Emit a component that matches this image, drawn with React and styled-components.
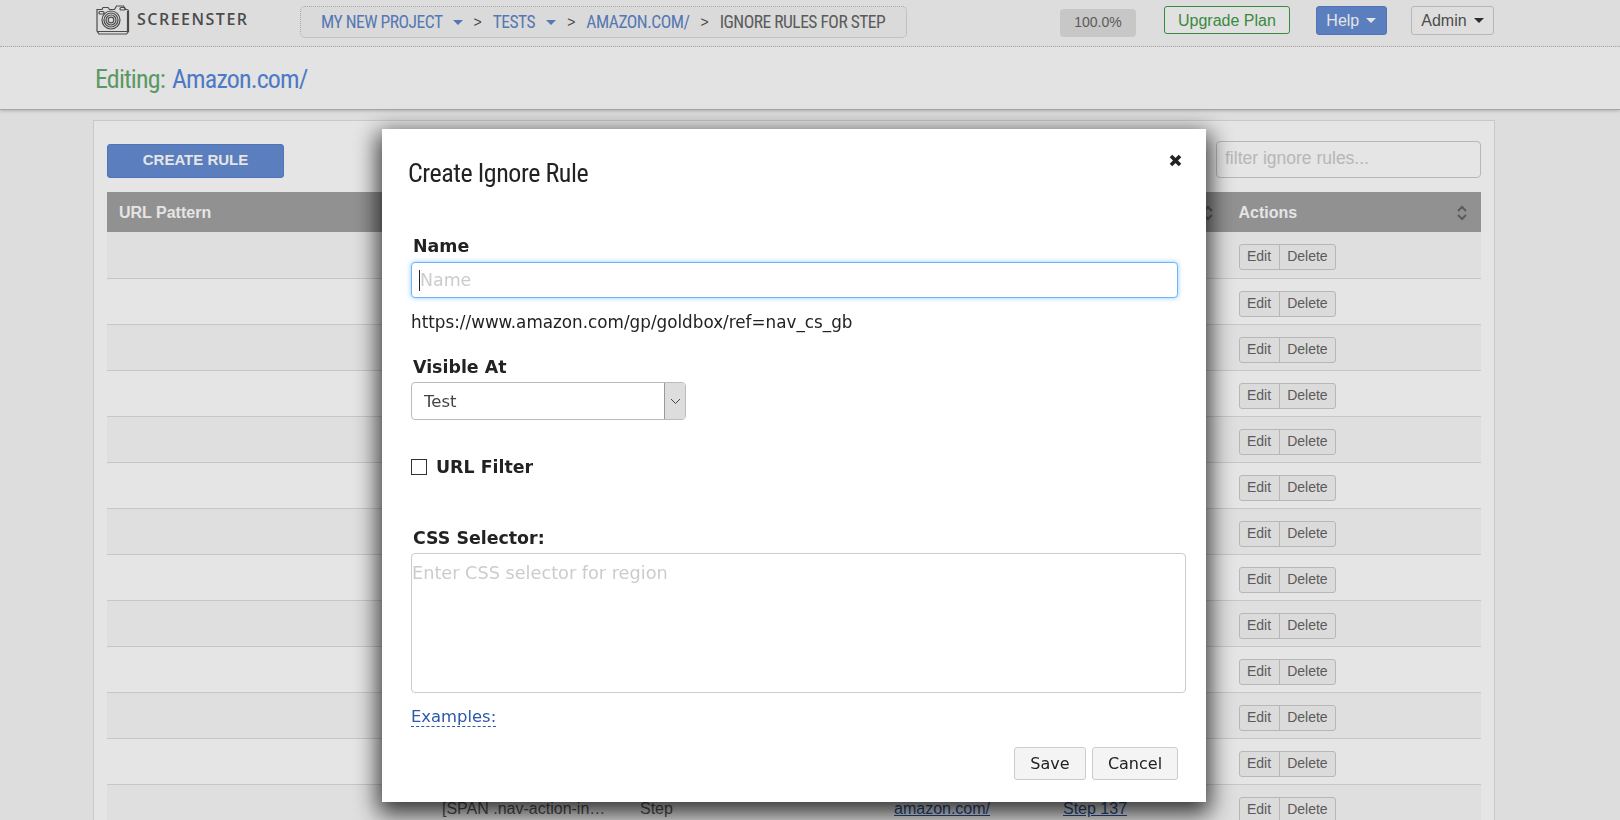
import React from 'react';
import styled, { createGlobalStyle } from 'styled-components';

const narrow = `"Roboto", "Liberation Sans", sans-serif`;
const arial = `"Liberation Sans", Arial, sans-serif`;
const dejavu = `"DejaVu Sans", Verdana, sans-serif`;

const Global = createGlobalStyle`
  html, body {
    margin: 0;
    height: 820px;
    overflow: hidden;
    background: #f6f6f6;
    font-family: ${arial};
  }
  * { box-sizing: border-box; }
`;

const Nav = styled.header`
  display: flex;
  align-items: flex-start;
  height: 47px;
  padding: 6px 0 0 95px;
  border-bottom: 1px dotted #c4c4c4;
`;

const Logo = styled.div`
  display: flex;
  align-items: center;
  gap: 7px;
  width: 205px;
  height: 30px;
  margin-top: -2px;
`;

const LogoText = styled.span`
  font: 600 16px "Open Sans", sans-serif;
  letter-spacing: 1.5px;
  color: #555;
`;

const Crumbs = styled.nav`
  display: flex;
  align-items: center;
  width: 607px;
  height: 32px;
  padding-left: 20px;
  border: 1px dotted #bbb;
  border-radius: 5px;
  background: #f3f3f3;
`;

const Crumb = styled.span`
  font: 400 17.5px ${narrow};
  font-stretch: 75%;
  letter-spacing: -0.5px;
  color: ${p => p.$muted ? '#666' : '#5f86c9'};
  white-space: nowrap;
`;

const Sep = styled.span`
  margin: 0 11px;
  font: 400 14px ${arial};
  color: #555;
`;

const Caret = styled.i`
  display: inline-block;
  margin-left: ${p => p.$gap || 10}px;
  border-top: 5px solid ${p => p.$color};
  border-left: 5px solid transparent;
  border-right: 5px solid transparent;
  vertical-align: 3px;
`;

const Right = styled.div`
  display: flex;
  align-items: flex-start;
  margin-left: 153px;
`;

const Zoom = styled.div`
  width: 76px;
  height: 28px;
  margin-top: 3px;
  border-radius: 4px;
  background: #dedede;
  color: #666;
  font: 14px/27px ${arial};
  text-align: center;
`;

const NavButton = styled.div`
  height: ${p => p.$h || 29}px;
  margin-left: ${p => p.$left}px;
  padding: 0 ${p => p.$pad || 9}px;
  border: 1px solid ${p => p.$border};
  border-radius: 3px;
  background: ${p => p.$bg || 'transparent'};
  color: ${p => p.$color};
  font: 16px/${p => (p.$h || 29) - 1}px ${arial};
  white-space: nowrap;
`;

const SubHeader = styled.div`
  height: 63px;
  padding: 14px 0 0 95px;
  background: #fdfdfd;
  border-bottom: 1px solid #b8b8b8;
  box-shadow: 0 1px 3px rgba(0, 0, 0, 0.2);
  font: 400 26px/36px ${narrow};
  font-stretch: 75%;
  letter-spacing: -0.85px;
`;

const Editing = styled.span`
  color: #66aa6f;
  margin-right: 7px;
`;

const Current = styled.span`
  color: #5688dc;
`;

const Panel = styled.main`
  width: 1402px;
  margin: 10px 0 0 93px;
  padding: 20px 13px 0;
  background: #fff;
  border: 1px solid #e0e0e0;
`;

const Toolbar = styled.div`
  display: flex;
  justify-content: space-between;
  align-items: flex-end;
  height: 37px;
  margin-bottom: 14px;
`;

const CreateButton = styled.button`
  width: 177px;
  height: 34px;
  padding: 0 0 3px;
  border: 1px solid #5a82cc;
  border-radius: 3px;
  background: #658dd4;
  color: #fff;
  font: 700 15px ${arial};
  text-transform: uppercase;
`;

const Filter = styled.input`
  width: 265px;
  height: 37px;
  padding: 0 8px 2px;
  border: 1px solid #ccc;
  border-radius: 4px;
  background: #fff;
  font: 17.5px ${arial};
  &::placeholder { color: #ccc; }
`;

const grid = `
  display: grid;
  grid-template-columns: 323px 198px 254px 169px 175.5px 254.5px;
`;

const HeadRow = styled.div`
  ${grid}
  height: 40px;
  background: #a2a2a2;
`;

const HeadCell = styled.div`
  display: flex;
  justify-content: space-between;
  align-items: center;
  padding: 1px 13px 0 12px;
  color: #fff;
  font: 700 16px ${arial};
`;

const Row = styled.div`
  ${grid}
  align-items: center;
  height: 46px;
  padding-top: 2px;
  background: ${p => p.$odd ? '#fff' : '#f9f9f9'};
  border-top: 1px solid #ddd;
  &:nth-child(2) { border-top: 0; }
`;

const Cell = styled.div`
  padding: 0 12px;
  color: #5c5c5c;
  font: 16px ${arial};
  white-space: nowrap;
`;

const ActionCell = styled(Cell)`
  margin-top: 2px;
`;

const RowLink = styled.a`
  color: #2a5298;
  text-decoration: underline;
`;

const ButtonGroup = styled.div`
  display: inline-flex;
  height: 26px;
  border: 1px solid #ccc;
  border-radius: 3px;
  background: #f4f4f4;
`;

const GroupItem = styled.span`
  padding: 0 7.500px;
  border-left: ${p => p.$first ? '0' : '1px solid #ccc'};
  color: #666;
  font: 14px/23px ${arial};
`;

const Backdrop = styled.div`
  position: fixed;
  inset: 0;
  padding: 129px 0 0 382px;
  background: rgba(0, 0, 0, 0.1);
`;

const Modal = styled.section`
  width: 824px;
  height: 673px;
  padding: 26px 20px 0 29px;
  background: #fff;
  box-shadow: 0 8px 22px 4px rgba(0, 0, 0, 0.76);
`;

const ModalHead = styled.div`
  display: flex;
  justify-content: space-between;
  align-items: flex-start;
  height: 81px;
  margin-left: -3px;
`;

const Title = styled.h2`
  margin: 0;
  font: 400 26px/36px ${narrow};
  font-stretch: 75%;
  letter-spacing: -0.45px;
  color: #222;
`;

const Close = styled.svg`
  width: 13px;
  height: 13px;
  margin: -1px 4px 0 0;
`;

const Label = styled.label`
  display: block;
  height: 20px;
  margin: ${p => p.$top || 0}px 0 ${p => p.$bottom}px 2px;
  color: #222;
  font: 700 17.4px/20px ${dejavu};
`;

const NameField = styled.div`
  position: relative;
  width: 767px;
`;

const NameInput = styled.input`
  display: block;
  width: 100%;
  height: 36px;
  padding: 0 8px;
  border: 1px solid #6fb5f5;
  border-radius: 4px;
  outline: 0;
  box-shadow: 0 0 5px rgba(100, 180, 250, 0.7);
  font: 17.4px ${dejavu};
  &::placeholder { color: #ccc; }
`;

const TextCaret = styled.span`
  position: absolute;
  left: 8px;
  top: 8px;
  width: 1px;
  height: 21px;
  background: #222;
`;

const UrlText = styled.div`
  margin-top: 14px;
  height: 20px;
  color: #222;
  font: 16.8px/20px ${dejavu};
`;

const SelectBox = styled.div`
  display: flex;
  justify-content: space-between;
  width: 275px;
  height: 38px;
  border: 1px solid #bbb;
  border-radius: 4px;
  color: #444;
  font: 16.5px/37px ${dejavu};
  padding-left: 12px;
  overflow: hidden;
`;

const SelectArrow = styled.span`
  display: flex;
  align-items: center;
  justify-content: center;
  width: 21px;
  background: #ddd;
  border-left: 1px solid #999;
`;

const CheckRow = styled.div`
  display: flex;
  align-items: center;
  gap: 9px;
  height: 20px;
  margin-top: 37px;
  color: #222;
  font: 700 17.4px/20px ${dejavu};
`;

const CheckBox = styled.span`
  width: 16px;
  height: 16px;
  border: 1px solid #333;
`;

const Area = styled.textarea`
  display: block;
  width: 775px;
  height: 140px;
  padding: 7px 0;
  border: 1px solid #ccc;
  border-radius: 4px;
  resize: none;
  font: 17.7px/24px ${dejavu};
  &::placeholder { color: #ccc; }
`;

const Examples = styled.a`
  display: inline-block;
  height: 22px;
  margin-top: 12px;
  border-bottom: 1px dashed #2a5aa8;
  color: #2a5aa8;
  font: 16.4px/24px ${dejavu};
`;

const Footer = styled.div`
  display: flex;
  justify-content: flex-end;
  gap: 6px;
  width: 767px;
  margin-top: 20px;
`;

const FootButton = styled.button`
  width: ${p => p.$w}px;
  height: 33px;
  border: 1px solid #ccc;
  border-radius: 3px;
  background: #f4f4f4;
  color: #222;
  font: 16px ${dejavu};
`;

const Sort = () => (
  <svg width="12" height="16" viewBox="0 0 12 16" fill="none" stroke="#666" strokeWidth="2">
    <path d="M2 6l4-4 4 4M2 10l4 4 4-4" />
  </svg>
);

const CameraLogo = () => (
  <svg width="35" height="33" viewBox="0 0 35 33" fill="none" stroke="#555" strokeWidth="1.2">
    <path d="M2 6.5h5l1-2h5l1.500 2h5l2-3.500h7l2 3.500h1a2 2 0 0 1 2 2v20l-2 2.500H4l-2-3z" />
    <path d="M2 28.500h30.500l1.500-1M32.500 8v20.500" />
    <circle cx="16" cy="17" r="9" />
    <circle cx="16" cy="17" r="7" />
    <circle cx="16" cy="17" r="5" />
    <circle cx="16" cy="17" r="2.800" />
    <rect x="4" y="8.500" width="5" height="2.500" rx="1" />
    <rect x="25" y="4.500" width="5" height="2.500" rx="1" />
  </svg>
);

// only the last row sticks out below the modal, the others show just their actions
const rows = Array.from({ length: 13 }, (_, i) => (i === 12
  ? { selector: '[SPAN .nav-action-in…', type: 'Step', url: 'amazon.com/', step: 'Step 137' }
  : {}));

export default function App() {
  return (
    <>
      <Global />
      <Nav>
        <Logo>
          <CameraLogo />
          <LogoText>SCREENSTER</LogoText>
        </Logo>
        <Crumbs>
          <Crumb>MY NEW PROJECT</Crumb>
          <Caret $color="#5f86c9" />
          <Sep>&gt;</Sep>
          <Crumb>TESTS</Crumb>
          <Caret $color="#5f86c9" $gap={11} />
          <Sep>&gt;</Sep>
          <Crumb>AMAZON.COM/</Crumb>
          <Sep>&gt;</Sep>
          <Crumb $muted>IGNORE RULES FOR STEP</Crumb>
        </Crumbs>
        <Right>
          <Zoom>100.0%</Zoom>
          <NavButton $left={28} $border="#3f9a45" $color="#3f9a45" $pad={13} $h={28} $bg="#fbfbfb">Upgrade Plan</NavButton>
          <NavButton $left={26} $border="#5a82cc" $color="#fff" $bg="#658dd4" $pad={9.5}>
            Help<Caret $color="#fff" $gap={7} />
          </NavButton>
          <NavButton $left={24} $border="#ccc" $color="#555" $bg="#f8f8f8" $pad={9.5}>
            Admin<Caret $color="#333" $gap={7} />
          </NavButton>
        </Right>
      </Nav>
      <SubHeader>
        <Editing>Editing:</Editing>
        <Current>Amazon.com/</Current>
      </SubHeader>
      <Panel>
        <Toolbar>
          <CreateButton>Create Rule</CreateButton>
          <Filter placeholder="filter ignore rules..." />
        </Toolbar>
        <div>
          <HeadRow>
            <HeadCell>URL Pattern</HeadCell>
            <HeadCell />
            <HeadCell />
            <HeadCell />
            <HeadCell><span /><Sort /></HeadCell>
            <HeadCell>Actions<Sort /></HeadCell>
          </HeadRow>
          {rows.map((row, i) => (
            <Row key={i} $odd={i % 2 === 1}>
              <Cell />
              <Cell>{row.selector}</Cell>
              <Cell>{row.type}</Cell>
              <Cell><RowLink>{row.url}</RowLink></Cell>
              <Cell><RowLink>{row.step}</RowLink></Cell>
              <ActionCell>
                <ButtonGroup>
                  <GroupItem $first>Edit</GroupItem>
                  <GroupItem>Delete</GroupItem>
                </ButtonGroup>
              </ActionCell>
            </Row>
          ))}
        </div>
      </Panel>
      <Backdrop>
        <Modal>
          <ModalHead>
            <Title>Create Ignore Rule</Title>
            <Close viewBox="0 0 13 13" stroke="#222" strokeWidth="3.600">
              <path d="M2 2l9 9M11 2l-9 9" />
            </Close>
          </ModalHead>
          <Label $bottom={6}>Name</Label>
          <NameField>
            <NameInput placeholder="Name" />
            <TextCaret />
          </NameField>
          <UrlText>https://www.amazon.com/gp/goldbox/ref=nav_cs_gb</UrlText>
          <Label $top={25} $bottom={5}>Visible At</Label>
          <SelectBox>
            Test
            <SelectArrow>
              <svg width="11" height="7" viewBox="0 0 11 7" fill="none" stroke="#444">
                <path d="M1 1l4.500 4.500L10 1" />
              </svg>
            </SelectArrow>
          </SelectBox>
          <CheckRow>
            <CheckBox />
            URL Filter
          </CheckRow>
          <Label $top={51} $bottom={5}>CSS Selector:</Label>
          <Area placeholder="Enter CSS selector for region" />
          <Examples>Examples:</Examples>
          <Footer>
            <FootButton $w={72}>Save</FootButton>
            <FootButton $w={86}>Cancel</FootButton>
          </Footer>
        </Modal>
      </Backdrop>
    </>
  );
}
